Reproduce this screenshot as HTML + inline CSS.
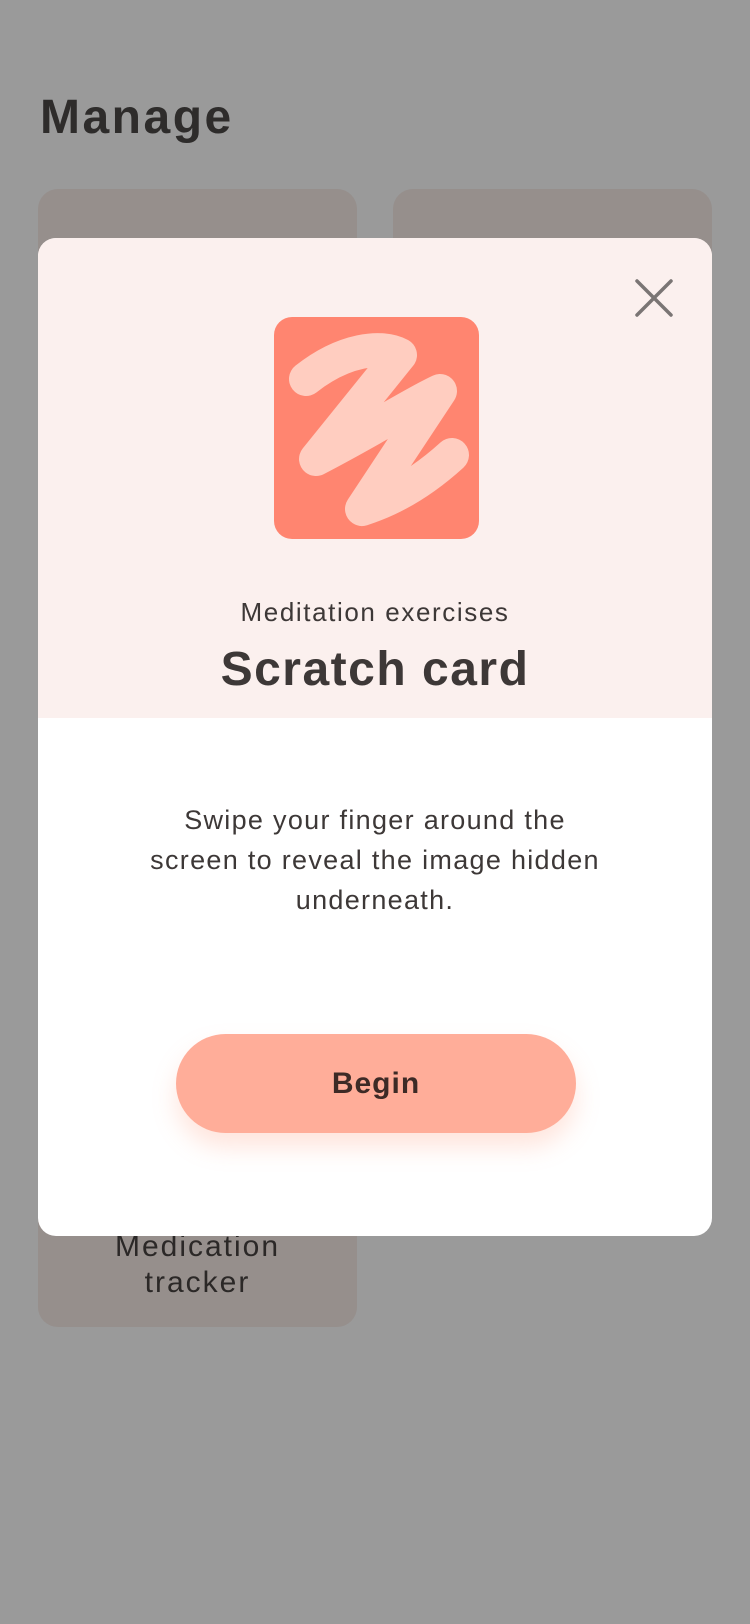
<!DOCTYPE html>
<html><head><meta charset="utf-8"><style>
body{margin:0;width:750px;height:1624px;background:#9a9a9a;position:relative;overflow:hidden;font-family:"Liberation Sans",sans-serif;color:#3d3837}
.t{position:absolute;font-weight:bold;font-size:48px;left:40px;top:90px;color:#2e2c2b;letter-spacing:2.5px}
.tile{position:absolute;background:#968f8c;border-radius:20px}
.modal{position:absolute;left:38px;top:238px;width:674px;height:998px;background:#fff;border-radius:18px;overflow:hidden}
.pink{position:absolute;left:0;top:0;width:100%;height:480px;background:#fbf0ee}
.c{position:absolute;left:0;width:100%;text-align:center}
.btn{position:absolute;left:138px;top:796px;width:400px;height:99px;border-radius:50px;background:#ffad99;box-shadow:0 14px 24px rgba(255,150,120,.25);text-align:center;line-height:99px;font-weight:bold;font-size:30px;color:#3d2a26;letter-spacing:1px}
</style></head><body>
<div class="t">Manage</div>
<div class="tile" style="left:38px;top:189px;width:319px;height:1138px"></div>
<div class="tile" style="left:393px;top:189px;width:319px;height:100px"></div>
<div class="c" style="left:38px;width:319px;top:1229px;font-size:30px;line-height:36px;color:#2b2827;letter-spacing:2px">Medication<br>tracker</div>
<div class="modal">
<div class="pink"></div>
<svg style="position:absolute;left:596px;top:40px" width="40" height="40" viewBox="0 0 40 40"><path d="M3 3L37 37M37 3L3 37" stroke="#7a7574" stroke-width="3.5" stroke-linecap="round"/></svg>
<svg style="position:absolute;left:236px;top:79px" width="205" height="222" viewBox="0 0 205 222"><rect width="205" height="222" rx="18" fill="#ff8570"/><path d="M32 62C70 32 108 28 126 38L42 142C100 112 140 86 166 74L88 192C126 180 156 158 178 138" fill="none" stroke="#ffcdc0" stroke-width="34" stroke-linecap="round" stroke-linejoin="round"/></svg>
<div class="c" style="top:359px;font-size:26px;letter-spacing:1.6px">Meditation exercises</div>
<div class="c" style="top:404px;font-size:48px;font-weight:bold;letter-spacing:1.5px">Scratch card</div>
<div class="c" style="top:562px;font-size:27px;line-height:40px;letter-spacing:1.3px">Swipe your finger around the<br>screen to reveal the image hidden<br>underneath.</div>
<div class="btn">Begin</div>
</div>
</body></html>
